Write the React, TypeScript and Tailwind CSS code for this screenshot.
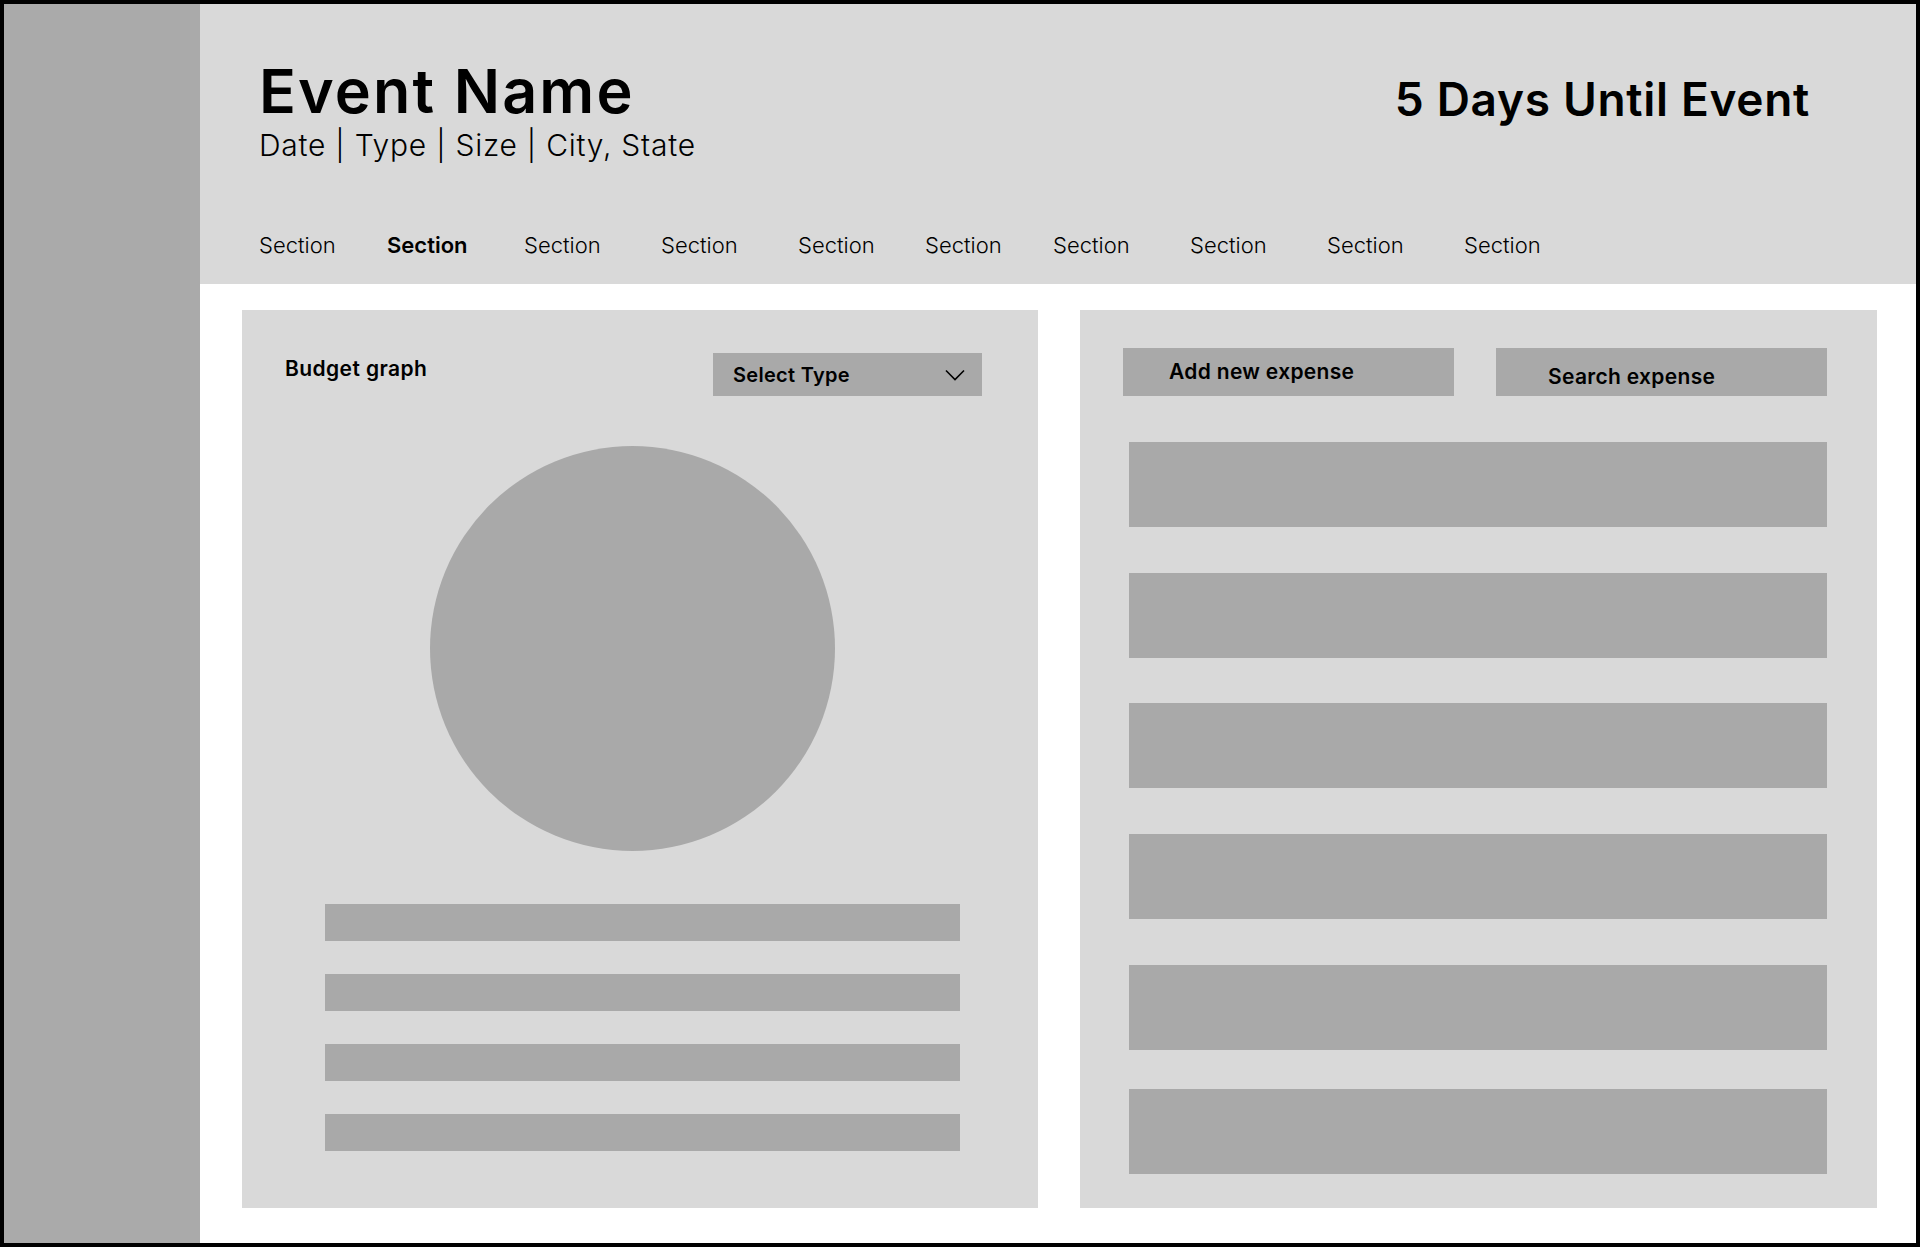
import React from "react";

// Event overview wireframe: sidebar, header with section tabs, budget graph + expense list.

const sections = [
  { w: "w-[128px]", bold: false },
  { w: "w-[137px]", bold: true },
  { w: "w-[137px]", bold: false },
  { w: "w-[137px]", bold: false },
  { w: "w-[127px]", bold: false },
  { w: "w-[128px]", bold: false },
  { w: "w-[137px]", bold: false },
  { w: "w-[137px]", bold: false },
  { w: "w-[137px]", bold: false },
  { w: "w-[137px]", bold: false },
];

const expenseRows = ["mt-0", "mt-[46px]", "mt-[45px]", "mt-[46px]", "mt-[46px]", "mt-[39px]"];

function Header() {
  return (
    <header className="flex h-[280px] shrink-0 flex-col bg-[#d9d9d9] pl-[59px] pr-[106px] pt-[57px]">
      <div className="flex items-start justify-between">
        <div className="flex flex-col">
          <h1 className="text-[61px] font-semibold leading-none tracking-[0.035em] text-black">Event Name</h1>
          <p className="mt-[8px] text-[30px] font-light leading-none tracking-[0.025em] text-black">
            Date | Type | Size | City, State
          </p>
        </div>
        <p className="mt-[15px] text-[46px] font-semibold leading-none tracking-[0.015em] text-black">
          5 Days Until Event
        </p>
      </div>
      <nav className="mt-[74px] flex">
        {sections.map((s, i) => (
          <span
            key={i}
            className={
              s.w +
              " shrink-0 text-[22px] leading-none text-black " +
              (s.bold ? "font-semibold" : "font-light")
            }
          >
            Section
          </span>
        ))}
      </nav>
    </header>
  );
}

function BudgetCard() {
  return (
    <section className="flex w-[796px] shrink-0 flex-col bg-[#d9d9d9]">
      <div className="flex items-start justify-between pl-[43px] pr-[56px] pt-[43px]">
        <h2 className="mt-[5px] text-[21px] font-semibold leading-none tracking-[0.02em] text-black">Budget graph</h2>
        <button className="flex h-[43px] w-[269px] items-center justify-between bg-[#a9a9a9] pl-[20px] pr-[17px]">
          <span className="text-[20px] font-semibold leading-none tracking-[0.015em] text-black">Select Type</span>
          <svg width={20} height={12} viewBox="0 0 20 12" fill="none" stroke="black" strokeWidth={1.6} aria-hidden>
            <path d="M1 1.5 10 10.5 19 1.5" />
          </svg>
        </button>
      </div>
      <div className="ml-[188px] mt-[50px] h-[405px] w-[405px] rounded-full bg-[#a9a9a9]" />
      <div className="ml-[83px] mt-[53px] flex flex-col gap-[33px]">
        {[0, 1, 2, 3].map((i) => (
          <div key={i} className="h-[37px] w-[635px] bg-[#a9a9a9]" />
        ))}
      </div>
    </section>
  );
}

function ExpenseCard() {
  return (
    <section className="flex w-[797px] shrink-0 flex-col bg-[#d9d9d9]">
      <div className="flex gap-[42px] pl-[43px] pt-[38px]">
        <button className="flex h-[48px] w-[331px] items-center bg-[#a9a9a9] pb-[2px] pl-[46px]">
          <span className="text-[21px] font-semibold leading-none tracking-[0.015em] text-black">Add new expense</span>
        </button>
        <button className="flex h-[48px] w-[331px] items-center bg-[#a9a9a9] pl-[52px] pt-[8px]">
          <span className="text-[21px] font-semibold leading-none tracking-[0.015em] text-black">Search expense</span>
        </button>
      </div>
      <div className="ml-[49px] mt-[46px] flex flex-col">
        {expenseRows.map((m, i) => (
          <div key={i} className={m + " h-[85px] w-[698px] bg-[#a9a9a9]"} />
        ))}
      </div>
    </section>
  );
}

export default function App() {
  return (
    <div className="h-[1247px] w-[1920px] bg-black p-[4px] font-['Inter','Noto_Sans',sans-serif]">
      <div className="flex h-full w-full">
        <aside className="w-[196px] shrink-0 bg-[#aaaaaa]" />
        <main className="flex flex-1 flex-col bg-white">
          <Header />
          <div className="flex gap-[42px] pl-[42px] pt-[26px]">
            <BudgetCard />
            <div className="flex h-[898px]">
              <ExpenseCard />
            </div>
          </div>
        </main>
      </div>
    </div>
  );
}
